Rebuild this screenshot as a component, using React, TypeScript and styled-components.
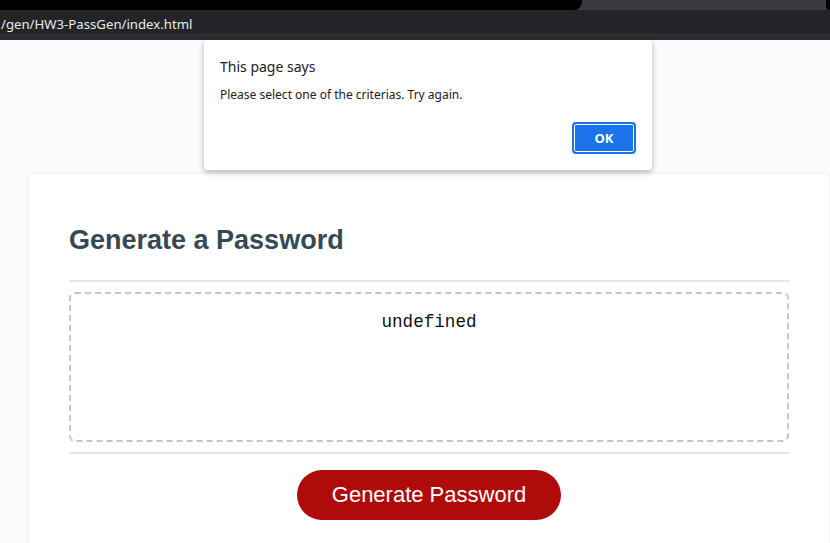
import React from 'react';
import styled, { createGlobalStyle } from 'styled-components';

const GlobalStyle = createGlobalStyle`
    html, body {
        margin: 0;
        padding: 0;
        height: 100%;
        overflow: hidden;
        background: #f9fbfd;
    }
    * {
        box-sizing: border-box;
    }
`;

const Window = styled.div`
    width: 830px;
    height: 543px;
    display: flex;
    flex-direction: column;
    background: #f9fbfd;
    overflow: hidden;
`;

// browser chrome
const TabStrip = styled.div`
    flex-shrink: 0;
    height: 10px;
    display: flex;
    background: #3a3b3e;
`;

const TabGap = styled.div<{ width: number; corner: 'left' | 'right' }>`
    width: ${({ width }) => width}px;
    background: #000;
    ${({ corner }) => (corner === 'right' ? 'border-bottom-right-radius: 8px;' : 'border-bottom-left-radius: 6px;')}
`;

const TabFill = styled.div`
    flex: 1;
`;

const AddressBar = styled.div`
    flex-shrink: 0;
    height: 25px;
    display: flex;
    align-items: center;
    padding-top: 3px;
    background: #232427;
    border-bottom: 1px solid #37383b;
`;

const Url = styled.span`
    margin-left: 1px;
    font-family: 'Noto Sans', 'Open Sans', sans-serif;
    font-size: 13.2px;
    color: #e8eaed;
    white-space: nowrap;
`;

const Toolbar = styled.div`
    flex-shrink: 0;
    height: 5px;
    background: #2b2c2f;
`;

// page
const Page = styled.div`
    position: relative;
    flex: 1;
    min-height: 0;
    padding: 134px 0 0 29px;
`;

const Card = styled.section`
    width: 800px;
    min-height: 400px;
    padding: 50px 40px 0;
    background: #fff;
    border-radius: 5px;
    box-shadow: 0 1px 6px rgba(0, 0, 0, 0.08);
`;

const Heading = styled.h2`
    margin: 0 0 24px;
    font-family: 'Liberation Sans', Arial, sans-serif;
    font-size: 27px;
    line-height: 32px;
    font-weight: 700;
    color: #364854;
`;

const Divider = styled.div`
    height: 2px;
    background: #e4e6e8;
`;

const Body = styled.div`
    padding: 10px 0;
`;

const Output = styled.textarea`
    display: block;
    width: 100%;
    height: 150px;
    margin: 0;
    padding: 18px 16px;
    border: 2px dashed #c4c6c9;
    border-radius: 6px;
    resize: none;
    outline: none;
    background: #fff;
    font-family: 'Liberation Mono', 'DejaVu Sans Mono', monospace;
    font-size: 17.6px;
    color: #111;
    text-align: center;
`;

const Footer = styled.div`
    display: flex;
    justify-content: center;
    padding-top: 16px;
`;

const GenerateButton = styled.button`
    padding: 12px 35px;
    border: none;
    border-radius: 25px;
    background: #b00b0b;
    color: #fff;
    font-family: 'Liberation Sans', Arial, sans-serif;
    font-size: 22px;
    line-height: 26px;
    cursor: pointer;
`;

// alert dialog
const Dialog = styled.div`
    position: absolute;
    top: 0;
    left: 204px;
    width: 448px;
    height: 130px;
    display: flex;
    flex-direction: column;
    padding: 17px 16px 16px;
    background: #fff;
    border-radius: 4px;
    box-shadow: 0 2px 6px rgba(0, 0, 0, 0.3);
    font-family: 'Noto Sans', 'Open Sans', sans-serif;
    color: #202124;
`;

const DialogTitle = styled.div`
    font-size: 14px;
    line-height: 20px;
`;

const DialogMessage = styled.div`
    margin-top: 9px;
    font-size: 12px;
    line-height: 18px;
`;

const DialogActions = styled.div`
    margin-top: auto;
    display: flex;
    justify-content: flex-end;
`;

const OkButton = styled.button`
    width: 64px;
    height: 32px;
    padding: 0;
    border: 2px solid #1a73e8;
    border-radius: 4px;
    box-shadow: inset 0 0 0 1px #fff;
    background: #1a73e8;
    color: #fff;
    font-family: 'Noto Sans', 'Open Sans', sans-serif;
    font-size: 13px;
    font-weight: 700;
`;

const App: React.FC = () => (
    <Window>
        <GlobalStyle />
        <TabStrip>
            <TabGap width={582} corner="right" />
            <TabFill />
            <TabGap width={4} corner="left" />
        </TabStrip>
        <AddressBar>
            <Url>/gen/HW3-PassGen/index.html</Url>
        </AddressBar>
        <Toolbar />
        <Page>
            <Card>
                <Heading>Generate a Password</Heading>
                <Divider />
                <Body>
                    <Output readOnly value="undefined" aria-label="Generated Password" />
                </Body>
                <Divider />
                <Footer>
                    <GenerateButton>Generate Password</GenerateButton>
                </Footer>
            </Card>
            <Dialog role="alertdialog">
                <DialogTitle>This page says</DialogTitle>
                <DialogMessage>Please select one of the criterias. Try again.</DialogMessage>
                <DialogActions>
                    <OkButton>OK</OkButton>
                </DialogActions>
            </Dialog>
        </Page>
    </Window>
);

export default App;
